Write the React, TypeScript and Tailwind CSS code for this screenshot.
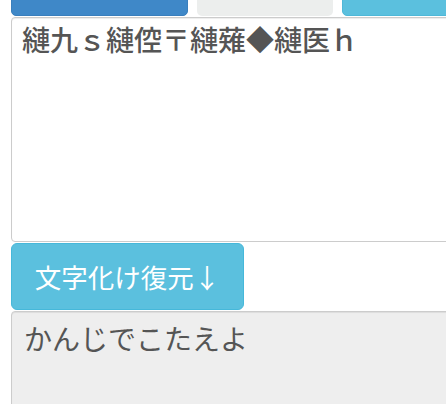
import React from "react";

export default function App() {
  const font = { fontFamily: '"Noto Sans CJK JP", "Noto Sans", sans-serif' };
  return (
    <div className="w-[446px] h-[404px] overflow-hidden bg-white" style={font}>
      <div className="w-[480px] pl-[11px] flex flex-col">
        <div className="flex gap-[9px] -mt-[35px] h-[51px]">
          <div className="w-[177px] h-[51px] rounded-[5px] bg-[#3f88c8] border border-[#3a7fbd]" />
          <div className="w-[136px] h-[51px] rounded-[5px] bg-[#eceeed]" />
          <div className="w-[120px] h-[51px] rounded-[5px] bg-[#5bc0de] border border-[#4fb8d8]" />
        </div>
        <textarea
          readOnly
          value="縺九ｓ縺倥〒縺薙◆縺医ｈ"
          className="mt-[1px] w-[470px] h-[225px] resize-none rounded-[4px] border border-[#cccccc] bg-white pl-[10px] pr-[11px] pt-[2px] pb-[6px] text-[28px] leading-[39px] font-medium text-[#555555] shadow-[inset_0_1px_1px_rgba(0,0,0,0.075)] outline-none"
          style={font}
        />
        <button
          className="mt-[1px] w-[233px] h-[67px] rounded-[6px] bg-[#5bc0de] border border-[#46b8da] text-white text-[26.5px] flex items-center justify-center"
          style={font}
        >
          文字化け復元↓
        </button>
        <textarea
          readOnly
          value="かんじでこたえよ"
          className="mt-[1px] w-[470px] h-[200px] resize-none rounded-[4px] border border-[#cccccc] bg-[#eeeeee] pl-[12px] pr-[12px] pt-[7px] text-[28px] leading-[38px] text-[#555555] shadow-[inset_0_1px_1px_rgba(0,0,0,0.075)] outline-none"
          style={font}
        />
      </div>
    </div>
  );
}
